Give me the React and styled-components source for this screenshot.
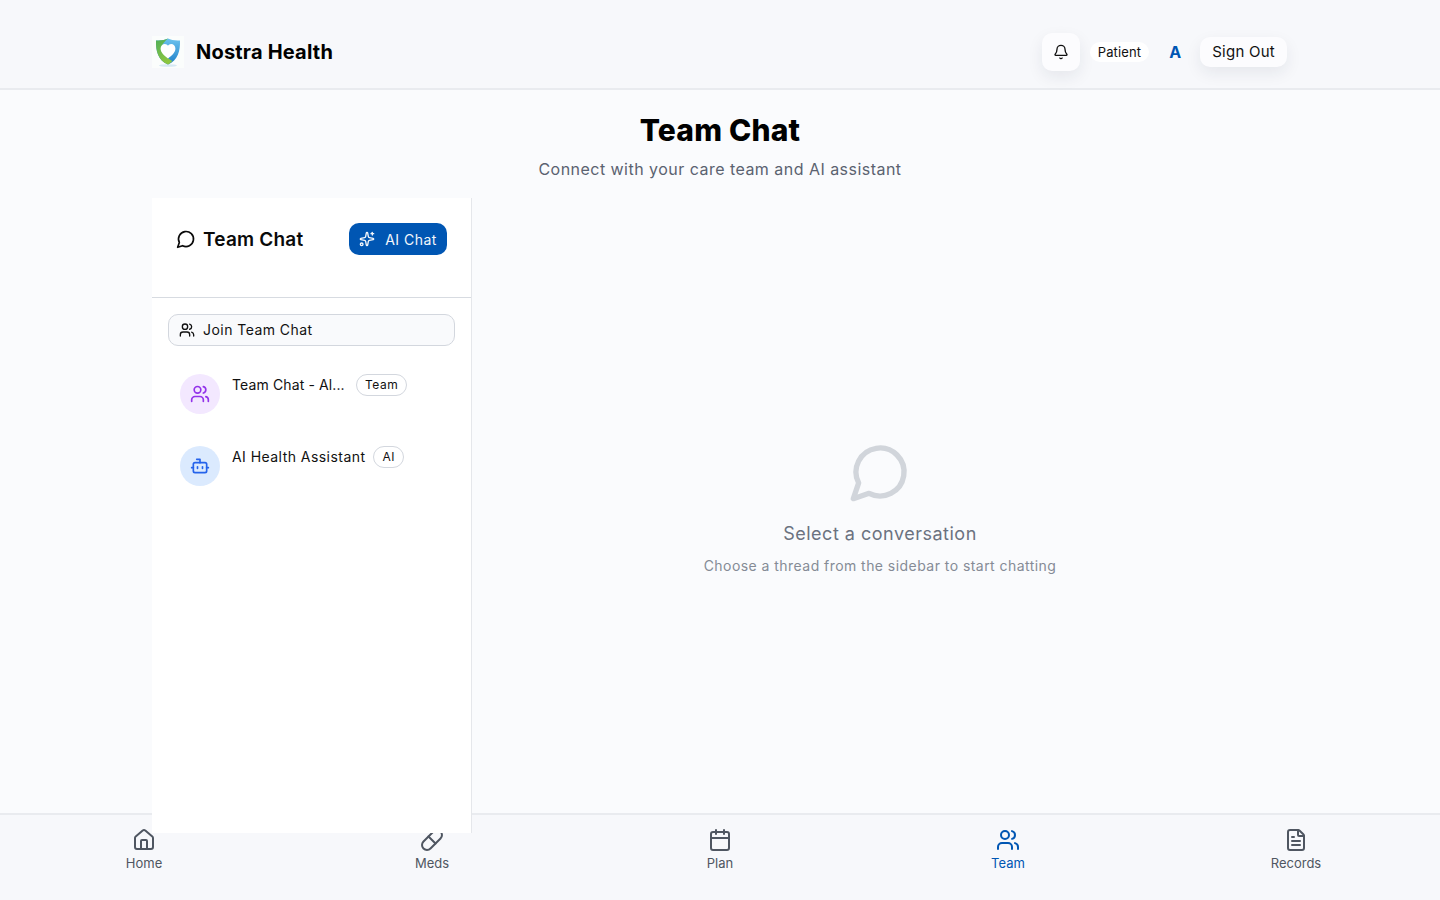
import React from 'react';
import styled, { createGlobalStyle } from 'styled-components';
import { Bell, Sparkles, Users, Bot, House, Pill, Calendar, FileText } from 'lucide-react';

const GlobalStyle = createGlobalStyle`
  * { box-sizing: border-box; }
  html, body { margin: 0; height: 100%; overflow: hidden; }
  body {
    background: #fafbfd;
    color: #0a0a0a;
    font-family: "Inter", "Noto Sans", sans-serif;
  }
`;

const Page = styled.div`
  height: 900px;
  overflow: hidden;
`;

const Header = styled.header`
  height: 90px;
  background: #f7f8fb;
  border-bottom: 2px solid #e9ebef;
  display: flex;
  justify-content: center;
`;

const HeaderInner = styled.div`
  width: 1136px;
  height: 88px;
  padding-top: 16px;
  display: flex;
  align-items: center;
  justify-content: space-between;
`;

const Brand = styled.div`
  display: flex;
  align-items: center;
  gap: 12px;
`;

const BrandName = styled.div`
  font-size: 20px;
  font-weight: 700;
  letter-spacing: 0.2px;
  color: #000;
`;

const HeaderActions = styled.div`
  display: flex;
  align-items: center;
  margin-right: 1px;
`;

const BellButton = styled.div`
  width: 38px;
  height: 38px;
  border-radius: 10px;
  background: #fcfcfe;
  box-shadow: 0 6px 16px rgba(30, 40, 60, 0.08);
  display: flex;
  align-items: center;
  justify-content: center;
  margin-right: 10px;
`;

const RolePill = styled.div`
  height: 20px;
  padding: 0 8px;
  border-radius: 10px;
  background: #fff;
  font-size: 13px;
  font-weight: 400;
  line-height: 20px;
  letter-spacing: 0.14px;
  color: #111;
  margin-right: 20px;
`;

const Avatar = styled.div`
  width: 11px;
  font-size: 16px;
  font-weight: 700;
  color: #0056b3;
  margin-right: 20px;
`;

const SignOut = styled.div`
  height: 30px;
  padding: 0 12px;
  border-radius: 10px;
  background: #fcfcfe;
  box-shadow: 0 6px 16px rgba(30, 40, 60, 0.08);
  font-size: 15px;
  font-weight: 400;
  line-height: 30px;
  letter-spacing: 0.25px;
  color: #111;
`;

const Main = styled.main`
  width: 1136px;
  margin: 0 auto;
`;

const Title = styled.h1`
  margin: 22px 0 0;
  text-align: center;
  font-size: 30px;
  line-height: 36px;
  font-weight: 800;
  letter-spacing: 0.2px;
  color: #000;
`;

const Subtitle = styled.p`
  margin: 9px 0 0;
  text-align: center;
  font-size: 16px;
  line-height: 24px;
  letter-spacing: 0.47px;
  color: #5a6270;
`;

const ChatGrid = styled.div`
  margin-top: 17px;
  display: flex;
`;

const Sidebar = styled.aside`
  position: relative;
  z-index: 2;
  width: 320px;
  height: 635px;
  background: #fff;
  border-right: 1px solid #e5e7eb;
`;

const SidebarHead = styled.div`
  height: 100px;
  padding: 25px 24px 0;
  border-bottom: 1px solid #d7dbe1;
  display: flex;
  align-items: flex-start;
  justify-content: space-between;
`;

const SidebarTitle = styled.div`
  display: flex;
  align-items: center;
  gap: 7px;
  height: 32px;
  font-size: 19px;
  font-weight: 600;
  letter-spacing: 0.2px;
  color: #0a0a0a;
`;

const AiButton = styled.div`
  width: 98px;
  height: 32px;
  border-radius: 10px;
  background: #0056b3;
  color: #f4f7fb;
  display: flex;
  align-items: center;
  justify-content: center;
  gap: 10px;
  font-size: 14px;
  font-weight: 400;
  letter-spacing: 0.45px;
`;

const SidebarBody = styled.div`
  padding: 16px;
`;

const JoinButton = styled.div`
  height: 32px;
  border: 1px solid #d3d7de;
  border-radius: 10px;
  background: #f9fafc;
  padding: 0 10px 1px;
  display: flex;
  align-items: center;
  gap: 8px;
  font-size: 14px;
  font-weight: 400;
  letter-spacing: 0.45px;
  color: #111;
`;

const ThreadList = styled.div`
  margin-top: 16px;
`;

const Thread = styled.div`
  height: 72px;
  padding: 12px;
  display: flex;
  gap: 12px;
`;

const ThreadIcon = styled.div`
  width: 40px;
  height: 40px;
  flex: none;
  border-radius: 50%;
  background: ${(p) => p.$bg};
  color: ${(p) => p.$fg};
  display: flex;
  align-items: center;
  justify-content: center;
`;

const ThreadHead = styled.div`
  display: flex;
  align-items: center;
  gap: 8px;
  height: 22px;
`;

const ThreadName = styled.div`
  padding-bottom: 2px;
  font-size: 14px;
  font-weight: 400;
  letter-spacing: ${(p) => (p.$short ? '0.12px' : '0.45px')};
  color: #111;
  white-space: nowrap;
  width: ${(p) => (p.$short ? '116px' : 'auto')};
`;

const Tag = styled.div`
  height: 22px;
  padding: 0 8px;
  border: 1px solid #d3d7de;
  border-radius: 11px;
  background: #fff;
  font-size: 12px;
  font-weight: 400;
  line-height: 20px;
  letter-spacing: 0.5px;
  color: #111;
`;

const EmptyPane = styled.section`
  flex: 1;
  height: 635px;
  display: flex;
  flex-direction: column;
  align-items: center;
  padding-top: 242px;
  color: #d1d5db;
`;

const EmptyTitle = styled.div`
  margin-top: 16px;
  font-size: 18px;
  line-height: 28px;
  font-weight: 400;
  letter-spacing: 0.5px;
  color: #6b7280;
`;

const EmptyText = styled.div`
  margin-top: 8px;
  font-size: 14px;
  line-height: 20px;
  letter-spacing: 0.45px;
  color: #858b96;
`;

const BottomNav = styled.nav`
  position: fixed;
  left: 0;
  right: 0;
  bottom: 0;
  height: 87px;
  background: #f7f8fb;
  border-top: 2px solid #e9ebef;
  display: grid;
  grid-template-columns: repeat(5, 1fr);
`;

const NavItem = styled.div`
  padding-top: 13px;
  display: flex;
  flex-direction: column;
  align-items: center;
  gap: 3px;
  font-size: 13px;
  line-height: 16px;
  font-weight: 400;
  color: ${(p) => (p.$active ? '#0056b3' : '#4f5661')};
`;

const navItems = [
  { label: 'Home', Icon: House },
  { label: 'Meds', Icon: Pill },
  { label: 'Plan', Icon: Calendar },
  { label: 'Team', Icon: Users, active: true },
  { label: 'Records', Icon: FileText },
];

// the reference has the older lucide bubble, tail running into the corner
function ChatBubble({ size }) {
  return (
    <svg width={size} height={size} viewBox="0 0 24 24" fill="none" stroke="currentColor" strokeWidth="2" strokeLinecap="round" strokeLinejoin="round" aria-hidden="true">
      <path d="M7.9 20A9 9 0 1 0 4 16.1L2 22Z" />
    </svg>
  );
}

function Logo() {
  return (
    <svg width="32" height="32" viewBox="0 0 32 32" aria-hidden="true">
      <defs>
        <linearGradient id="shieldLeft" x1="0" y1="0" x2="0.4" y2="1">
          <stop offset="0" stopColor="#4fae5a" />
          <stop offset="1" stopColor="#8cc63f" />
        </linearGradient>
        <linearGradient id="shieldRight" x1="0" y1="0" x2="0" y2="1">
          <stop offset="0" stopColor="#6cc3ee" />
          <stop offset="1" stopColor="#1f7fc9" />
        </linearGradient>
      </defs>
      <rect width="32" height="32" fill="#fbfdfc" />
      <ellipse cx="16" cy="29.500" rx="9" ry="1.300" fill="#d6e8f3" />
      <path d="M16 2.500c3 1.500 7 2.200 12 1.900.3 10.600-1.900 19.500-12 24.100C5.900 23.900 3.700 15 4 4.400c5 .3 9-.4 12-1.900z" fill="url(#shieldRight)" />
      <path d="M16 2.500C13 4 9 4.700 4 4.400 3.700 15 5.900 23.900 16 28.500c2-1 3.300-2.200 4.200-3.500C15 22 11 18 9 12 10 8 13 5 16 2.500z" fill="url(#shieldLeft)" />
      <path d="M16 22.500C10.800 18.800 8.600 15.800 8.600 12.600 8.600 9.800 10.600 7.900 12.900 7.900c1.300 0 2.400.7 3.100 1.900.7-1.200 1.800-1.900 3.100-1.900 2.300 0 4.300 1.900 4.300 4.700 0 3.200-2.200 6.200-7.400 9.900z" fill="#fff" />
    </svg>
  );
}

export default function App() {
  return (
    <Page>
      <GlobalStyle />
      <Header>
        <HeaderInner>
          <Brand>
            <Logo />
            <BrandName>Nostra Health</BrandName>
          </Brand>
          <HeaderActions>
            <BellButton>
              <Bell size={16} color="#111" />
            </BellButton>
            <RolePill>Patient</RolePill>
            <Avatar>A</Avatar>
            <SignOut>Sign Out</SignOut>
          </HeaderActions>
        </HeaderInner>
      </Header>
      <Main>
        <Title>Team Chat</Title>
        <Subtitle>Connect with your care team and AI assistant</Subtitle>
        <ChatGrid>
          <Sidebar>
            <SidebarHead>
              <SidebarTitle>
                <ChatBubble size={20} />
                Team Chat
              </SidebarTitle>
              <AiButton>
                <Sparkles size={16} />
                AI Chat
              </AiButton>
            </SidebarHead>
            <SidebarBody>
              <JoinButton>
                <Users size={16} />
                Join Team Chat
              </JoinButton>
              <ThreadList>
                <Thread>
                  <ThreadIcon $bg="#f3e8ff" $fg="#9333ea">
                    <Users size={20} />
                  </ThreadIcon>
                  <ThreadHead>
                    <ThreadName $short>Team Chat - Al...</ThreadName>
                    <Tag>Team</Tag>
                  </ThreadHead>
                </Thread>
                <Thread>
                  <ThreadIcon $bg="#dbeafe" $fg="#2563eb">
                    <Bot size={20} />
                  </ThreadIcon>
                  <ThreadHead>
                    <ThreadName>AI Health Assistant</ThreadName>
                    <Tag>AI</Tag>
                  </ThreadHead>
                </Thread>
              </ThreadList>
            </SidebarBody>
          </Sidebar>
          <EmptyPane>
            <ChatBubble size={64} />
            <EmptyTitle>Select a conversation</EmptyTitle>
            <EmptyText>Choose a thread from the sidebar to start chatting</EmptyText>
          </EmptyPane>
        </ChatGrid>
      </Main>
      <BottomNav>
        {navItems.map(({ label, Icon, active }) => (
          <NavItem key={label} $active={active}>
            <Icon size={24} />
            {label}
          </NavItem>
        ))}
      </BottomNav>
    </Page>
  );
}
